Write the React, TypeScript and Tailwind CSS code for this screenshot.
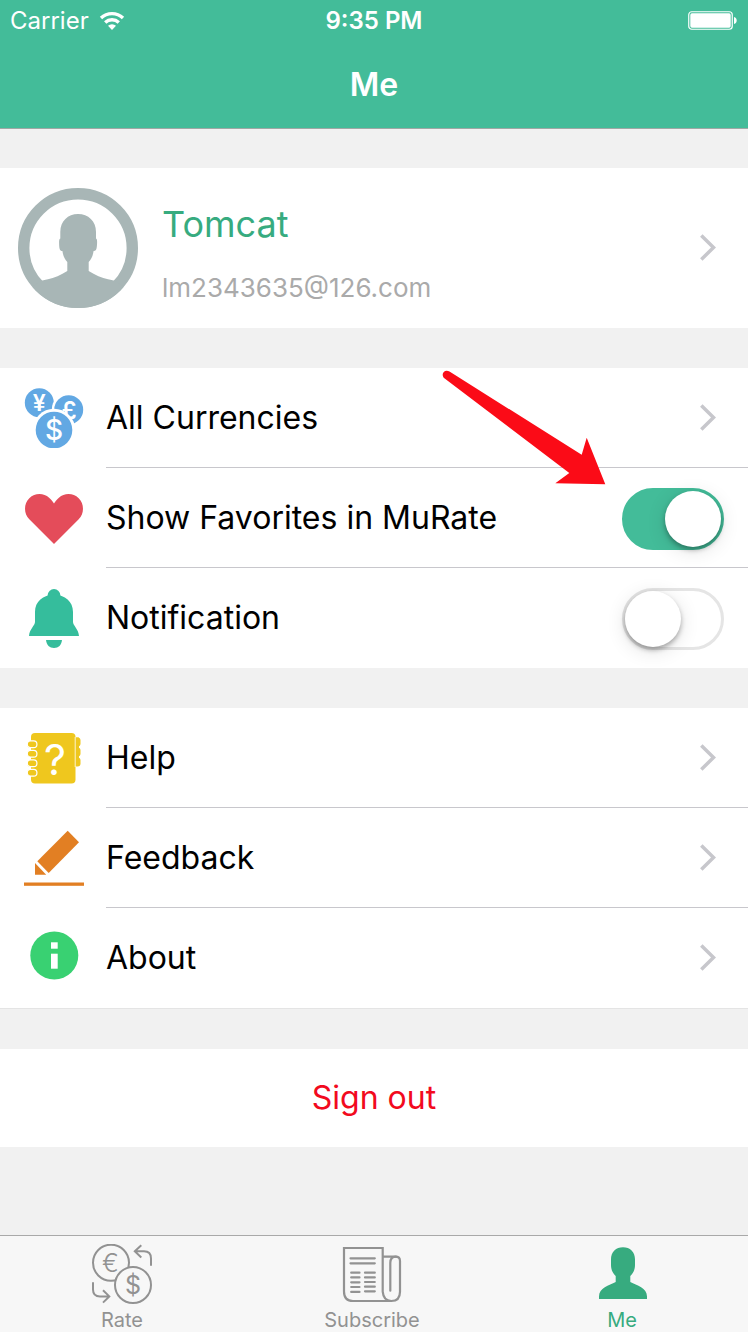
import type { ReactNode } from "react";

function WifiIcon() {
  return (
    <svg width="26" height="20" viewBox="0 0 26 20" fill="none" stroke="#fff" strokeWidth="3.4" aria-hidden="true">
      <path d="M2 7 A16 16 0 0 1 24 7" />
      <path d="M6.2 11.4 A10 10 0 0 1 19.8 11.4" />
      <path d="M13 19 L9 14.8 A5.8 5.8 0 0 1 17 14.8 Z" fill="#fff" stroke="none" />
    </svg>
  );
}

function BatteryIcon() {
  return (
    <svg width="50" height="20" viewBox="0 0 50 20" aria-hidden="true">
      <rect x="0.75" y="0.75" width="43.5" height="17.5" rx="3" fill="none" stroke="#fff" strokeWidth="1.2" />
      <rect x="2.3" y="2.3" width="40.4" height="14.4" rx="1.6" fill="#fff" />
      <path d="M46 6 C49.6 6.6 49.6 12.4 46 13 Z" fill="#fff" />
    </svg>
  );
}

function Avatar() {
  return (
    <svg width="120" height="120" viewBox="0 0 120 120" aria-hidden="true" className="shrink-0">
      <defs>
        <clipPath id="avatar-clip">
          <circle cx="60" cy="60" r="60" />
        </clipPath>
      </defs>
      <circle cx="60" cy="60" r="54.3" fill="#fff" stroke="#a8b6b6" strokeWidth="11.4" />
      <path
        clipPath="url(#avatar-clip)"
        fill="#a8b6b6"
        d="M42.3 50.5 V44 C42.3 33 50 26 60 26 C70.3 26 78 33 78 44 V50.5 C79.4 51 79.2 54 78.9 58 C78.6 61.5 78 63 75.6 63 C75 67.5 73.5 71 70.7 74 V83 C77 87 84 90 90 91.2 C93.5 92 96 92 98 93.5 L106 99 V120 H14 V99 L22 93.5 C24 92 26.5 92 30 91.2 C36 90 43 87 49.3 83 V74 C46.5 71 45 67.5 44.4 63 C42 63 41.5 61.5 41.2 58 C41 54 40.9 51 42.3 50.5 Z"
      />
    </svg>
  );
}

function IconBox({ children }: { children: ReactNode }) {
  return (
    <svg width="60" height="60" viewBox="0 0 60 60" aria-hidden="true" className="shrink-0">
      {children}
    </svg>
  );
}

function CurrenciesIcon() {
  return (
    <IconBox>
      <g fontFamily="Inter, sans-serif" textAnchor="middle" fontWeight="600">
        <circle cx="15.3" cy="14.7" r="14.5" fill="#62a8e3" />
        <text x="15.3" y="22.5" fontSize="23" fill="#fff">¥</text>
        <circle cx="44.7" cy="21.7" r="17" fill="#fff" />
        <circle cx="44.7" cy="21.7" r="14.5" fill="#62a8e3" />
        <text x="45" y="31" fontSize="24" fill="#fff">£</text>
        <circle cx="30" cy="42" r="21.3" fill="#fff" />
        <circle cx="30" cy="42" r="18.3" fill="#62a8e3" />
        <text x="30" y="52" fontSize="28" fontWeight="500" fill="#fff">$</text>
      </g>
    </IconBox>
  );
}

function HeartIcon() {
  return (
    <IconBox>
      <path
        fill="#e44c5a"
        d="M30 56 L5.3 31.3 C-0.4 25.5 -0.4 15.8 5.3 10.2 C10.8 4.8 19.6 4.7 25.1 9.7 C27.4 11.7 29 13.6 30 15.6 C31 13.6 32.6 11.7 34.9 9.7 C40.4 4.7 49.2 4.8 54.7 10.2 C60.4 15.8 60.4 25.5 54.7 31.3 Z"
      />
    </IconBox>
  );
}

function BellIcon() {
  return (
    <IconBox>
      <g fill="#35bd9c">
        <circle cx="30" cy="7.5" r="6.4" />
        <path d="M11 24 C11 13.5 19 6.8 30 6.8 C41 6.8 49 13.5 49 24 V34 C49 37.5 54.5 41 55 48 H5 C5.5 41 11 37.5 11 34 Z" />
        <path d="M22 52 H38 C37.5 57 34.5 60 30 60 C25.5 60 22.5 57 22 52 Z" />
      </g>
    </IconBox>
  );
}

function HelpIcon() {
  return (
    <IconBox>
      <g fill="#efc71e">
        <rect x="44" y="9.5" width="12.5" height="9" rx="3" />
        <rect x="44" y="19.5" width="12.5" height="9" rx="3" />
        <rect x="44" y="29.5" width="12.5" height="9" rx="3" />
        <rect x="46" y="9.5" width="9" height="26" />
        <rect x="7" y="5" width="44.5" height="50.5" rx="4" />
        <path d="M51.2 9 V39" stroke="#fff" strokeWidth="0.8" />
      </g>
      <g fill="#efc71e" stroke="#fff" strokeWidth="1.2">
        <rect x="3.3" y="12.8" width="9.6" height="6.8" rx="3.2" />
        <rect x="3.3" y="22.3" width="9.6" height="6.8" rx="3.2" />
        <rect x="3.3" y="31.8" width="9.6" height="6.8" rx="3.2" />
        <rect x="3.3" y="41.3" width="9.6" height="6.8" rx="3.2" />
      </g>
      <text x="31" y="46.5" fontSize="43" fontFamily="Inter, sans-serif" textAnchor="middle" fill="#fff">?</text>
    </IconBox>
  );
}

function PencilIcon() {
  return (
    <IconBox>
      <g fill="#e27f23">
        <path d="M43.7 2.7 L55 14.3 L24.7 45 L13.3 33.3 Z" />
        <path d="M11 35 L22.2 46.7 H11 Z" />
        <rect x="0" y="54.5" width="60" height="3.3" />
      </g>
    </IconBox>
  );
}

function InfoIcon() {
  return (
    <IconBox>
      <circle cx="30.3" cy="27.5" r="24" fill="#39d172" />
      <rect x="27" y="14.3" width="6.7" height="6.4" fill="#fff" />
      <rect x="27" y="25.7" width="6.7" height="15" fill="#fff" />
    </IconBox>
  );
}

function Chevron() {
  return (
    <svg width="18" height="28" viewBox="0 0 18 28" fill="none" stroke="#c7c7cc" strokeWidth="3.5" aria-hidden="true" className="mr-[31px] shrink-0">
      <path d="M2.3 1.5 L14.5 13.5 L2.3 25.5" />
    </svg>
  );
}

function RateIcon() {
  return (
    <IconBox>
      <g fill="none" stroke="#929292" strokeWidth="2">
        <circle cx="19" cy="18.7" r="18" />
        <path d="M42.5 7.3 H52 Q59 7.3 59 14.5 V21.7 M49.3 1.2 L42.8 7.3 L49.3 13.4" />
        <path d="M1 38.3 V45.5 Q1 52.4 8 52.4 H17.5 M11 46.2 L17.3 52.4 L11 58.6" />
        <circle cx="41" cy="41" r="18" fill="#f7f7f7" />
      </g>
      <g fontFamily="Inter, sans-serif" textAnchor="middle" fill="#929292">
        <text x="18.5" y="28" fontSize="25" fontWeight="300">€</text>
        <text x="41" y="50" fontSize="25">$</text>
      </g>
    </IconBox>
  );
}

function NewspaperIcon() {
  return (
    <IconBox>
      <g fill="none" stroke="#929292" strokeWidth="2.2">
        <path d="M49.3 57 H11 Q2 57 2 47.5 V4 H40.7 V47.7 Q41.5 57 49.3 57 Q58 57 58 47.7 V17 Q58 12.7 53.5 12.7 H40.7" />
        <path d="M54 12.7 Q48.3 12.7 48.3 19 V46.7" strokeLinecap="round" />
        <path d="M8.5 14.3 H32.8 M8.5 19.3 H32.8" strokeLinecap="round" />
        <path
          strokeLinecap="round"
          d="M9.2 28.7 H17.5 M9.2 33.4 H17.5 M9.2 38.3 H17.5 M9.2 43 H17.5 M9.2 47.9 H17.5 M23 28.7 H32.8 M23 33.4 H32.8 M23 38 H32.8 M23 42.7 H32.8 M23 47.3 H32.8"
        />
      </g>
    </IconBox>
  );
}

function PersonIcon() {
  return (
    <IconBox>
      <path
        fill="#37ab7f"
        d="M19 15.3 C19 8 24 3.3 31 3.3 C38 3.3 43 8 43 15.3 V21 C43 26 41 29.5 38.3 32 V38 C45 41.5 55 43.5 55 52.5 V55 H7 V52.5 C7 43.5 17 41.5 23.7 38 V32 C21 29.5 19 26 19 21 Z"
      />
    </IconBox>
  );
}

function RowBody({ icon, label, last, children }: { icon: ReactNode; label: string; last?: boolean; children: ReactNode }) {
  return (
    <>
      <span className="flex w-[106px] shrink-0 items-center pl-6">{icon}</span>
      <span className={last ? "flex flex-1 items-center justify-between" : "flex flex-1 items-center justify-between border-b border-[#c8c7cc]"}>
        <span>{label}</span>
        {children}
      </span>
    </>
  );
}

function LinkRow({ icon, label, last }: { icon: ReactNode; label: string; last?: boolean }) {
  return (
    <a href="#" className="flex h-[100px]">
      <RowBody icon={icon} label={label} last={last}>
        <Chevron />
      </RowBody>
    </a>
  );
}

function SwitchRow({ icon, label, on, last }: { icon: ReactNode; label: string; on?: boolean; last?: boolean }) {
  return (
    <label className="flex h-[100px]">
      <RowBody icon={icon} label={label} last={last}>
        <input
          type="checkbox"
          role="switch"
          defaultChecked={on}
          className="mt-0.5 mr-6 flex h-[62px] w-[102px] appearance-none items-center rounded-full border-[3px] border-[#e5e5e5] bg-white before:size-14 before:rounded-full before:bg-white before:shadow-[0_3px_5px_rgba(0,0,0,0.3),0_4px_20px_rgba(0,0,0,0.12)] checked:justify-end checked:border-[#43bc99] checked:bg-[#43bc99]"
        />
      </RowBody>
    </label>
  );
}

function Tab({ icon, label, active }: { icon: ReactNode; label: string; active?: boolean }) {
  return (
    <a
      href="#"
      aria-current={active ? "page" : undefined}
      className={active ? "flex w-28 flex-col items-center text-[#37ab7f]" : "flex w-28 flex-col items-center text-[#929292]"}
    >
      {icon}
      <span className="text-[20px] leading-8">{label}</span>
    </a>
  );
}

export default function App() {
  return (
    <div className="flex min-h-screen flex-col bg-[#f1f1f1] font-['Inter',sans-serif] text-[32px] leading-10 text-black">
      <header className="border-b border-[#9fa8a5] bg-[#43bc99] text-white">
        <div className="grid h-[42px] grid-cols-3 items-center px-2.5 text-[24px]">
          <span className="flex items-center gap-2.5">
            Carrier
            <WifiIcon />
          </span>
          <span className="text-center font-semibold">9:35 PM</span>
          <span className="flex justify-end">
            <BatteryIcon />
          </span>
        </div>
        <h1 className="flex h-[86px] items-center justify-center font-semibold">Me</h1>
      </header>

      <main className="flex flex-1 flex-col gap-10 pt-[39px]">
        <a href="#" className="flex h-40 items-center bg-white pl-[18px]">
          <Avatar />
          <span className="flex flex-1 flex-col gap-6 pt-2 pl-6">
            <span className="text-[36px] leading-12 text-[#37ab7f]">Tomcat</span>
            <span className="text-[26px] leading-8 text-[#aaaaaa]">lm2343635@126.com</span>
          </span>
          <Chevron />
        </a>

        <section className="relative bg-white">
          <LinkRow icon={<CurrenciesIcon />} label="All Currencies" />
          <SwitchRow icon={<HeartIcon />} label="Show Favorites in MuRate" on />
          <SwitchRow icon={<BellIcon />} label="Notification" last />
          <svg width="164" height="116" viewBox="0 0 164 116" aria-hidden="true" className="pointer-events-none absolute top-0.5 right-[142px]">
            <path
              fill="#fb0b17"
              d="M7.5 1.6 L139.7 84.7 L144.7 67.7 L163.3 114.3 L113.3 113.3 L127.3 103 L1.7 7.7 C-1.2 3.8 2.5 -1 7.5 1.6 Z"
            />
          </svg>
        </section>

        <section className="border-b border-[#e4e4e4] bg-white">
          <LinkRow icon={<HelpIcon />} label="Help" />
          <LinkRow icon={<PencilIcon />} label="Feedback" />
          <LinkRow icon={<InfoIcon />} label="About" last />
        </section>

        <button type="button" className="h-[98px] bg-white text-[#f20a1e]">
          Sign out
        </button>
      </main>

      <nav className="flex h-[97px] justify-between border-t border-[#a9a9a9] bg-[#f7f7f7] pt-2 pr-[70px] pl-[66px]">
        <Tab icon={<RateIcon />} label="Rate" />
        <Tab icon={<NewspaperIcon />} label="Subscribe" />
        <Tab icon={<PersonIcon />} label="Me" active />
      </nav>
    </div>
  );
}
